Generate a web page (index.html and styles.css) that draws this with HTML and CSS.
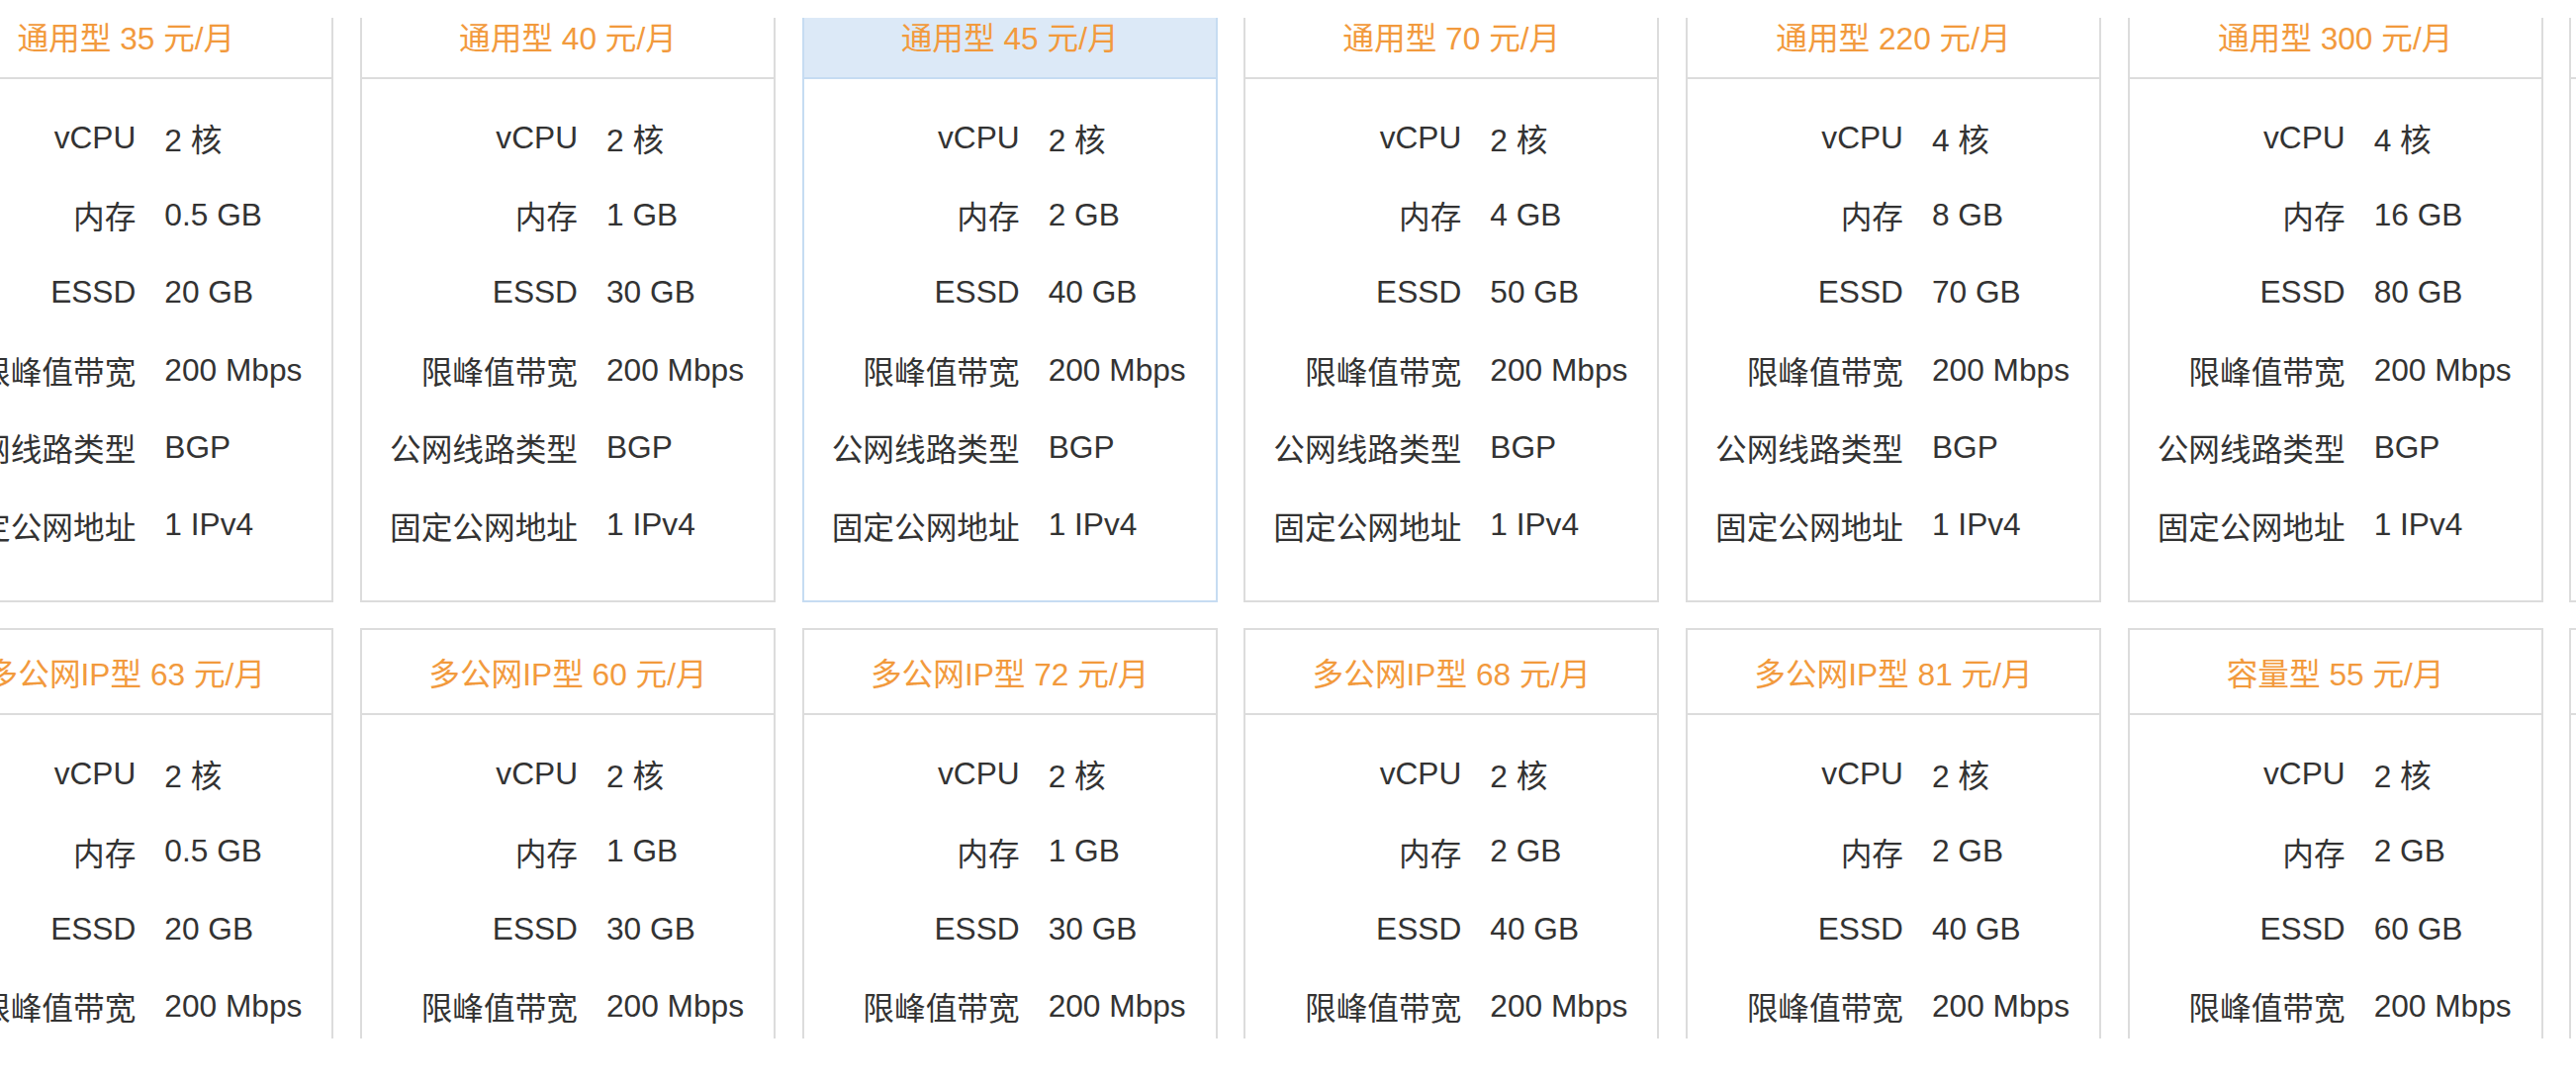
FILE: index.html
```html
<!DOCTYPE html>
<html lang="zh-CN">
<head>
<meta charset="utf-8">
<title>云服务器套餐</title>
<link rel="stylesheet" href="styles.css">
</head>
<body>
<div class="viewport">
  <div class="grid">
    <div class="card">
      <div class="card-head">通用型 35 元/月</div>
      <dl class="card-body">
        <div class="spec"><dt>vCPU</dt><dd>2 核</dd></div>
        <div class="spec"><dt>内存</dt><dd>0.5 GB</dd></div>
        <div class="spec"><dt>ESSD</dt><dd>20 GB</dd></div>
        <div class="spec"><dt>限峰值带宽</dt><dd>200 Mbps</dd></div>
        <div class="spec"><dt>公网线路类型</dt><dd>BGP</dd></div>
        <div class="spec"><dt>固定公网地址</dt><dd>1 IPv4</dd></div>
      </dl>
    </div>
    <div class="card">
      <div class="card-head">通用型 40 元/月</div>
      <dl class="card-body">
        <div class="spec"><dt>vCPU</dt><dd>2 核</dd></div>
        <div class="spec"><dt>内存</dt><dd>1 GB</dd></div>
        <div class="spec"><dt>ESSD</dt><dd>30 GB</dd></div>
        <div class="spec"><dt>限峰值带宽</dt><dd>200 Mbps</dd></div>
        <div class="spec"><dt>公网线路类型</dt><dd>BGP</dd></div>
        <div class="spec"><dt>固定公网地址</dt><dd>1 IPv4</dd></div>
      </dl>
    </div>
    <div class="card card-active">
      <div class="card-head">通用型 45 元/月</div>
      <dl class="card-body">
        <div class="spec"><dt>vCPU</dt><dd>2 核</dd></div>
        <div class="spec"><dt>内存</dt><dd>2 GB</dd></div>
        <div class="spec"><dt>ESSD</dt><dd>40 GB</dd></div>
        <div class="spec"><dt>限峰值带宽</dt><dd>200 Mbps</dd></div>
        <div class="spec"><dt>公网线路类型</dt><dd>BGP</dd></div>
        <div class="spec"><dt>固定公网地址</dt><dd>1 IPv4</dd></div>
      </dl>
    </div>
    <div class="card">
      <div class="card-head">通用型 70 元/月</div>
      <dl class="card-body">
        <div class="spec"><dt>vCPU</dt><dd>2 核</dd></div>
        <div class="spec"><dt>内存</dt><dd>4 GB</dd></div>
        <div class="spec"><dt>ESSD</dt><dd>50 GB</dd></div>
        <div class="spec"><dt>限峰值带宽</dt><dd>200 Mbps</dd></div>
        <div class="spec"><dt>公网线路类型</dt><dd>BGP</dd></div>
        <div class="spec"><dt>固定公网地址</dt><dd>1 IPv4</dd></div>
      </dl>
    </div>
    <div class="card">
      <div class="card-head">通用型 220 元/月</div>
      <dl class="card-body">
        <div class="spec"><dt>vCPU</dt><dd>4 核</dd></div>
        <div class="spec"><dt>内存</dt><dd>8 GB</dd></div>
        <div class="spec"><dt>ESSD</dt><dd>70 GB</dd></div>
        <div class="spec"><dt>限峰值带宽</dt><dd>200 Mbps</dd></div>
        <div class="spec"><dt>公网线路类型</dt><dd>BGP</dd></div>
        <div class="spec"><dt>固定公网地址</dt><dd>1 IPv4</dd></div>
      </dl>
    </div>
    <div class="card">
      <div class="card-head">通用型 300 元/月</div>
      <dl class="card-body">
        <div class="spec"><dt>vCPU</dt><dd>4 核</dd></div>
        <div class="spec"><dt>内存</dt><dd>16 GB</dd></div>
        <div class="spec"><dt>ESSD</dt><dd>80 GB</dd></div>
        <div class="spec"><dt>限峰值带宽</dt><dd>200 Mbps</dd></div>
        <div class="spec"><dt>公网线路类型</dt><dd>BGP</dd></div>
        <div class="spec"><dt>固定公网地址</dt><dd>1 IPv4</dd></div>
      </dl>
    </div>
    <div class="card">
      <div class="card-head">通用型 400 元/月</div>
      <dl class="card-body">
        <div class="spec"><dt>vCPU</dt><dd>8 核</dd></div>
        <div class="spec"><dt>内存</dt><dd>32 GB</dd></div>
        <div class="spec"><dt>ESSD</dt><dd>100 GB</dd></div>
        <div class="spec"><dt>限峰值带宽</dt><dd>200 Mbps</dd></div>
        <div class="spec"><dt>公网线路类型</dt><dd>BGP</dd></div>
        <div class="spec"><dt>固定公网地址</dt><dd>1 IPv4</dd></div>
      </dl>
    </div>

    <div class="card">
      <div class="card-head">多公网IP型 63 元/月</div>
      <dl class="card-body">
        <div class="spec"><dt>vCPU</dt><dd>2 核</dd></div>
        <div class="spec"><dt>内存</dt><dd>0.5 GB</dd></div>
        <div class="spec"><dt>ESSD</dt><dd>20 GB</dd></div>
        <div class="spec"><dt>限峰值带宽</dt><dd>200 Mbps</dd></div>
        <div class="spec"><dt>公网线路类型</dt><dd>BGP</dd></div>
        <div class="spec"><dt>固定公网地址</dt><dd>3 IPv4</dd></div>
      </dl>
    </div>
    <div class="card">
      <div class="card-head">多公网IP型 60 元/月</div>
      <dl class="card-body">
        <div class="spec"><dt>vCPU</dt><dd>2 核</dd></div>
        <div class="spec"><dt>内存</dt><dd>1 GB</dd></div>
        <div class="spec"><dt>ESSD</dt><dd>30 GB</dd></div>
        <div class="spec"><dt>限峰值带宽</dt><dd>200 Mbps</dd></div>
        <div class="spec"><dt>公网线路类型</dt><dd>BGP</dd></div>
        <div class="spec"><dt>固定公网地址</dt><dd>2 IPv4</dd></div>
      </dl>
    </div>
    <div class="card">
      <div class="card-head">多公网IP型 72 元/月</div>
      <dl class="card-body">
        <div class="spec"><dt>vCPU</dt><dd>2 核</dd></div>
        <div class="spec"><dt>内存</dt><dd>1 GB</dd></div>
        <div class="spec"><dt>ESSD</dt><dd>30 GB</dd></div>
        <div class="spec"><dt>限峰值带宽</dt><dd>200 Mbps</dd></div>
        <div class="spec"><dt>公网线路类型</dt><dd>BGP</dd></div>
        <div class="spec"><dt>固定公网地址</dt><dd>3 IPv4</dd></div>
      </dl>
    </div>
    <div class="card">
      <div class="card-head">多公网IP型 68 元/月</div>
      <dl class="card-body">
        <div class="spec"><dt>vCPU</dt><dd>2 核</dd></div>
        <div class="spec"><dt>内存</dt><dd>2 GB</dd></div>
        <div class="spec"><dt>ESSD</dt><dd>40 GB</dd></div>
        <div class="spec"><dt>限峰值带宽</dt><dd>200 Mbps</dd></div>
        <div class="spec"><dt>公网线路类型</dt><dd>BGP</dd></div>
        <div class="spec"><dt>固定公网地址</dt><dd>2 IPv4</dd></div>
      </dl>
    </div>
    <div class="card">
      <div class="card-head">多公网IP型 81 元/月</div>
      <dl class="card-body">
        <div class="spec"><dt>vCPU</dt><dd>2 核</dd></div>
        <div class="spec"><dt>内存</dt><dd>2 GB</dd></div>
        <div class="spec"><dt>ESSD</dt><dd>40 GB</dd></div>
        <div class="spec"><dt>限峰值带宽</dt><dd>200 Mbps</dd></div>
        <div class="spec"><dt>公网线路类型</dt><dd>BGP</dd></div>
        <div class="spec"><dt>固定公网地址</dt><dd>3 IPv4</dd></div>
      </dl>
    </div>
    <div class="card">
      <div class="card-head">容量型 55 元/月</div>
      <dl class="card-body">
        <div class="spec"><dt>vCPU</dt><dd>2 核</dd></div>
        <div class="spec"><dt>内存</dt><dd>2 GB</dd></div>
        <div class="spec"><dt>ESSD</dt><dd>60 GB</dd></div>
        <div class="spec"><dt>限峰值带宽</dt><dd>200 Mbps</dd></div>
        <div class="spec"><dt>公网线路类型</dt><dd>BGP</dd></div>
        <div class="spec"><dt>固定公网地址</dt><dd>1 IPv4</dd></div>
      </dl>
    </div>
    <div class="card">
      <div class="card-head">容量型 95 元/月</div>
      <dl class="card-body">
        <div class="spec"><dt>vCPU</dt><dd>2 核</dd></div>
        <div class="spec"><dt>内存</dt><dd>4 GB</dd></div>
        <div class="spec"><dt>ESSD</dt><dd>120 GB</dd></div>
        <div class="spec"><dt>限峰值带宽</dt><dd>200 Mbps</dd></div>
        <div class="spec"><dt>公网线路类型</dt><dd>BGP</dd></div>
        <div class="spec"><dt>固定公网地址</dt><dd>1 IPv4</dd></div>
      </dl>
    </div>
  </div>
</div>
</body>
</html>
```

FILE: styles.css
```css
html, body {
  margin: 0;
  padding: 0;
  background: #ffffff;
}

body {
  font-family: "Liberation Sans", Arial, "Noto Sans CJK SC", sans-serif;
  font-size: 31.67px;
  color: #333333;
}

.viewport {
  margin-top: 18px;
  height: 1032px;
  overflow: hidden;
}

.grid {
  display: grid;
  grid-template-columns: repeat(7, 420px);
  column-gap: 26.67px;
  row-gap: 26.67px;
  margin-top: -26px;
  margin-left: -82.67px;
  width: max-content;
}

.card {
  box-sizing: border-box;
  height: 616.67px;
  border: 2px solid #dcdcdc;
  background: #ffffff;
}

.card-head {
  height: 84px;
  border-bottom: 2px solid #dcdcdc;
  display: flex;
  align-items: center;
  justify-content: center;
  color: #f29a3d;
  white-space: nowrap;
}

.card-active {
  border-color: #c6dcf2;
}

.card-active .card-head {
  background: #dce9f7;
  border-bottom-color: #c6dcf2;
}

.card-body {
  margin: 0;
  padding: 20px 0 0 0;
}

.spec {
  display: grid;
  grid-template-columns: 218px 1fr;
  column-gap: 29px;
  height: 78.3px;
  align-items: center;
  white-space: nowrap;
}

.spec dt {
  text-align: right;
}

.spec dd {
  margin: 0;
  text-align: left;
}
```
